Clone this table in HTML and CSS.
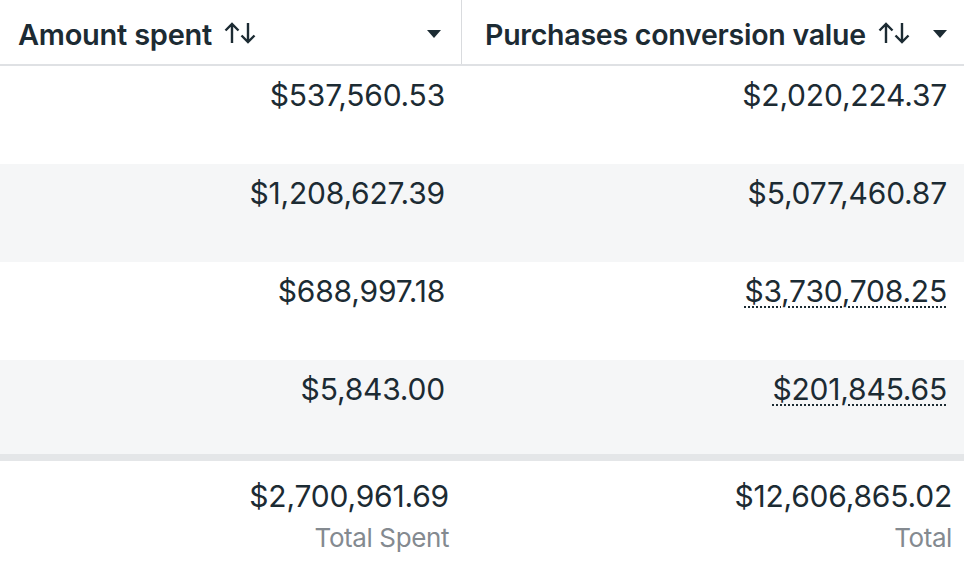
FILE: index.html
```html
<!DOCTYPE html>
<html>
<head>
<meta charset="utf-8">
<link rel="stylesheet" href="styles.css">
</head>
<body>
<div class="table">
  <div class="head">
    <div class="hcell first">
      <span class="label">Amount spent</span>
      <svg class="sort" viewBox="0 0 34 24" width="34" height="24"><path d="M9 22V3M2.5 9.5L9 3l6.5 6.5M25 2v19M18.5 14.5L25 21l6.5-6.5" fill="none" stroke="#1c2b33" stroke-width="2.4"/></svg>
      <span class="spacer"></span>
      <svg class="caret" viewBox="0 0 14 8" width="14" height="8"><path d="M0 0h14L7 8z" fill="#1c2b33"/></svg>
    </div>
    <div class="hcell second">
      <span class="label">Purchases conversion value</span>
      <svg class="sort" viewBox="0 0 34 24" width="34" height="24"><path d="M9 22V3M2.5 9.5L9 3l6.5 6.5M25 2v19M18.5 14.5L25 21l6.5-6.5" fill="none" stroke="#1c2b33" stroke-width="2.4"/></svg>
      <span class="spacer"></span>
      <svg class="caret" viewBox="0 0 14 8" width="14" height="8"><path d="M0 0h14L7 8z" fill="#1c2b33"/></svg>
    </div>
  </div>
  <div class="row">
    <div class="cell">$537,560.53</div>
    <div class="cell">$2,020,224.37</div>
  </div>
  <div class="row alt">
    <div class="cell">$1,208,627.39</div>
    <div class="cell">$5,077,460.87</div>
  </div>
  <div class="row">
    <div class="cell">$688,997.18</div>
    <div class="cell"><span class="dotted">$3,730,708.25</span></div>
  </div>
  <div class="row alt last">
    <div class="cell">$5,843.00</div>
    <div class="cell"><span class="dotted">$201,845.65</span></div>
  </div>
  <div class="foot">
    <div class="fcell">
      <div class="total">$2,700,961.69</div>
      <div class="sub">Total Spent</div>
    </div>
    <div class="fcell second">
      <div class="total">$12,606,865.02</div>
      <div class="sub">Total</div>
    </div>
  </div>
</div>
</body>
</html>
```
FILE: styles.css
```css
* { box-sizing: border-box; }
html, body { margin: 0; padding: 0; background: #fff; }
body {
  font-family: Inter, "Noto Sans", sans-serif;
  color: #1c2b33;
  width: 964px;
  height: 578px;
  overflow: hidden;
}
.table { display: flex; flex-direction: column; }
.head {
  display: grid;
  grid-template-columns: 462px 502px;
  height: 66px;
  border-bottom: 2px solid #dfe1e4;
}
.hcell {
  display: flex;
  align-items: center;
  padding-top: 4px;
}
.hcell.first {
  padding-left: 18px;
  padding-right: 20px;
  border-right: 1px solid #d9dbde;
}
.hcell.second {
  padding-left: 23px;
  padding-right: 17px;
}
.label {
  font-size: 29px;
  font-weight: 600;
  letter-spacing: -0.25px;
}
.hcell.second .label { font-size: 28.5px; }
.sort { margin-left: 11px; margin-top: -2px; }
.spacer { flex: 1; }
.row {
  display: grid;
  grid-template-columns: 462px 502px;
  height: 98px;
}
.row.alt { background: #f5f6f7; }
.row.last { height: 101px; border-bottom: 7px solid #e4e6e8; }
.cell {
  text-align: right;
  font-size: 30px;
  line-height: 36px;
  padding-top: 11px;
  padding-right: 17px;
  letter-spacing: -0.2px;
}
.dotted {
  text-decoration: underline dotted #1c2b33;
  text-decoration-thickness: 2px;
  text-underline-offset: 4px;
}
.foot {
  display: grid;
  grid-template-columns: 462px 502px;
  padding-top: 17px;
}
.fcell { text-align: right; padding-right: 13px; }
.fcell.second { padding-right: 12px; }
.total {
  font-size: 30px;
  line-height: 36px;
  letter-spacing: -0.2px;
}
.sub {
  font-size: 26px;
  line-height: 30px;
  color: #848a90;
  margin-top: 9px;
  letter-spacing: -0.4px;
}
```
